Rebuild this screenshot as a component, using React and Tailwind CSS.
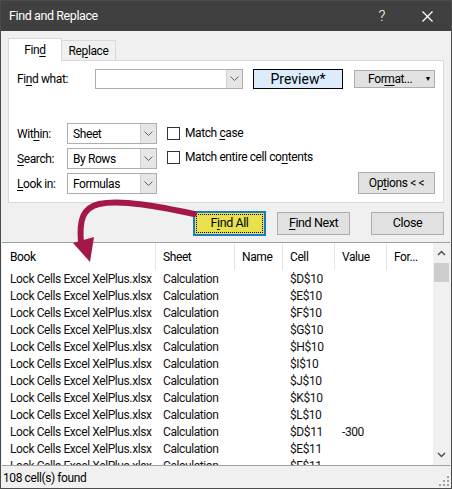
import React from 'react';

const font = { fontFamily: '"Segoe UI", Roboto, "Noto Sans", sans-serif' };

const U = ({ children }) => <span className="underline underline-offset-2">{children}</span>;

const Chevron = () => (
  <svg width="9" height="6" viewBox="0 0 9 6" fill="none" stroke="#606060" strokeWidth="1">
    <polyline points="0.5,0.5 4.5,4.5 8.5,0.5" />
  </svg>
);

const Select = ({ value }) => (
  <div className="flex h-[21px] w-[90px] border border-[#adadad] bg-white">
    <div className="flex flex-1 items-center pl-[5px] text-[12px] text-black">{value}</div>
    <div className="flex w-[16px] items-center justify-center border-l border-[#cfcfcf] bg-[#e6e6e6]">
      <Chevron />
    </div>
  </div>
);

const Checkbox = ({ children }) => (
  <div className="flex items-center gap-[5px] text-[12px] text-black">
    <div className="h-[13px] w-[13px] border border-[#333] bg-white" />
    <span>{children}</span>
  </div>
);

const rows = [
  ['$D$10', ''], ['$E$10', ''], ['$F$10', ''], ['$G$10', ''], ['$H$10', ''], ['$I$10', ''],
  ['$J$10', ''], ['$K$10', ''], ['$L$10', ''], ['$D$11', '-300'], ['$E$11', ''], ['$F$11', ''],
];

const cols = [
  { name: 'Book', w: 'w-[154px]' },
  { name: 'Sheet', w: 'w-[79px]' },
  { name: 'Name', w: 'w-[48px]' },
  { name: 'Cell', w: 'w-[52px]' },
  { name: 'Value', w: 'w-[52px]' },
  { name: 'For...', w: 'w-[45px]' },
];

const App = () => {
  return (
    <div className="relative flex h-[489px] w-[452px] flex-col overflow-hidden border border-[#4b4b4b] bg-[#f0f0f0] tracking-[-0.4px]" style={font}>
      {/* Title bar */}
      <div className="flex h-[30px] shrink-0 items-center bg-[#404040] pl-[8px] pr-[18px] text-white">
        <span className="text-[12.5px]">Find and Replace</span>
        <span className="ml-auto mr-[37px] text-[15px] font-light">?</span>
        <svg width="11" height="11" viewBox="0 0 11 11" stroke="#fff" strokeWidth="1.2">
          <line x1="0.5" y1="0.5" x2="10.5" y2="10.5" />
          <line x1="10.5" y1="0.5" x2="0.5" y2="10.5" />
        </svg>
      </div>

      {/* Tabs */}
      <div className="ml-[7px] mt-[7px] flex items-end">
        <div className="relative z-10 -mb-px flex h-[23px] w-[54px] items-center justify-center border border-b-0 border-[#d9d9d9] bg-white text-[12px] text-black">
          Fin<U>d</U>
        </div>
        <div className="flex h-[20px] w-[54px] items-center justify-center border border-l-0 border-b-0 border-[#d9d9d9] bg-[#f0f0f0] text-[12px] text-black">
          Re<U>p</U>lace
        </div>
      </div>

      {/* Panel */}
      <div className="mx-[7px] flex h-[143px] w-[436px] flex-col border border-[#d9d9d9] bg-white px-[8px] pt-[8px]">
        <div className="flex h-[20px] items-center">
          <span className="w-[78px] text-[12px] text-black">Fi<U>n</U>d what:</span>
          <div className="flex h-[20px] w-[148px] border border-[#adadad] bg-white">
            <div className="flex-1" />
            <div className="flex w-[16px] items-center justify-center border-l border-[#cfcfcf] bg-[#e6e6e6]">
              <Chevron />
            </div>
          </div>
          <div className="ml-[10px] flex h-[20px] w-[90px] items-center justify-center border border-black bg-[#dcecfc] text-[14px] tracking-normal text-black">
            Preview*
          </div>
          <div className="ml-[11px] flex h-[18px] w-[81px] items-center justify-center border border-[#adadad] bg-[#e1e1e1] pl-[10px] text-[12px] text-black">
            For<U>m</U>at...
            <span className="ml-[12px] text-[7px]">▼</span>
          </div>
        </div>

        <div className="mt-[34px] flex">
          <div className="flex flex-col gap-[4px]">
            <div className="flex items-center">
              <span className="w-[50px] text-[12px] text-black">Wit<U>h</U>in:</span>
              <Select value="Sheet" />
            </div>
            <div className="flex items-center">
              <span className="w-[50px] text-[12px] text-black"><U>S</U>earch:</span>
              <Select value="By Rows" />
            </div>
            <div className="flex items-center">
              <span className="w-[50px] text-[12px] text-black"><U>L</U>ook in:</span>
              <Select value="Formulas" />
            </div>
          </div>
          <div className="ml-[10px] mt-[1px] flex flex-col gap-[6px]">
            <Checkbox>Match <U>c</U>ase</Checkbox>
            <Checkbox>Match entire cell co<U>n</U>tents</Checkbox>
          </div>
          <div className="ml-auto mt-[49px] flex h-[22px] w-[77px] items-center justify-center border border-[#adadad] bg-[#e1e1e1] text-[12px] text-black">
            Op<U>t</U>ions &lt; &lt;
          </div>
        </div>
      </div>

      {/* Buttons */}
      <div className="mt-[8px] flex items-center pr-[7px]">
        <div className="ml-[192px] flex h-[25px] w-[73px] items-center justify-center border-2 border-[#1a7ac4] bg-[#e8e04c] p-[1px]">
          <div className="flex h-full w-full items-center justify-center border border-dotted border-black text-[12.5px] text-black">
            F<U>i</U>nd All
          </div>
        </div>
        <div className="ml-[11px] flex h-[23px] w-[73px] items-center justify-center border border-[#adadad] bg-[#e1e1e1] text-[12.5px] text-black">
          <U>F</U>ind Next
        </div>
        <div className="ml-auto flex h-[23px] w-[73px] items-center justify-center border border-[#adadad] bg-[#e1e1e1] text-[12.5px] text-black">
          Close
        </div>
      </div>

      {/* Results list */}
      <div className="mx-[1px] mt-[6px] flex h-[224px] border-y border-[#a0a0a0] bg-white">
        <div className="flex flex-1 flex-col overflow-hidden">
          <div className="flex h-[27px] shrink-0">
            {cols.map((c, i) => (
              <div
                key={c.name}
                className={`${c.w} flex items-center ${i === 0 ? 'pl-[8px]' : 'pl-[7px]'} ${i < cols.length - 1 ? 'border-r border-[#e5e5e5]' : ''} text-[12px] text-black`}
              >
                {c.name}
              </div>
            ))}
          </div>
          {rows.map(([cell, value], i) => (
            <div key={i} className="flex h-[17px] shrink-0 items-center text-[12px] text-[#111]">
              <div className="w-[154px] overflow-hidden whitespace-nowrap pl-[8px]">Lock Cells Excel XelPlus.xlsx</div>
              <div className="w-[79px] overflow-hidden whitespace-nowrap pl-[7px]">Calculation</div>
              <div className="w-[48px]" />
              <div className="w-[52px] pl-[7px]">{cell}</div>
              <div className="w-[52px] pl-[7px]">{value}</div>
            </div>
          ))}
        </div>
        {/* Scrollbar */}
        <div className="flex w-[17px] flex-col items-center bg-[#f0f0f0]">
          <div className="flex h-[20px] items-center justify-center">
            <svg width="9" height="6" viewBox="0 0 9 6" fill="none" stroke="#505050" strokeWidth="1.5">
              <polyline points="1,5 4.5,1.5 8,5" />
            </svg>
          </div>
          <div className="h-[19px] w-[15px] bg-[#cdcdcd]" />
          <div className="mt-auto flex h-[20px] items-center justify-center">
            <svg width="9" height="6" viewBox="0 0 9 6" fill="none" stroke="#505050" strokeWidth="1.5">
              <polyline points="1,1 4.5,4.5 8,1" />
            </svg>
          </div>
        </div>
      </div>

      {/* Status bar */}
      <div className="relative flex flex-1 items-center pl-[2px] pt-[2px] text-[12px] text-black">
        108 cell(s) found
        <svg className="absolute bottom-[2px] right-[2px]" width="10" height="10" viewBox="0 0 10 10" fill="#a0a0a0">
          <rect x="8" y="0" width="2" height="2" />
          <rect x="4" y="4" width="2" height="2" />
          <rect x="8" y="4" width="2" height="2" />
          <rect x="0" y="8" width="2" height="2" />
          <rect x="4" y="8" width="2" height="2" />
          <rect x="8" y="8" width="2" height="2" />
        </svg>
      </div>

      {/* Annotation arrow */}
      <svg className="pointer-events-none absolute left-0 top-0" width="452" height="489" viewBox="0 0 452 489">
        <path d="M193 213 C160 206, 120 198, 98 203 C82 207, 78 218, 80 242" fill="none" stroke="#a3174b" strokeWidth="6" strokeLinecap="round" />
        <polygon points="72,242 93,236 89,261" fill="#a3174b" />
      </svg>
    </div>
  );
};

export default App;
